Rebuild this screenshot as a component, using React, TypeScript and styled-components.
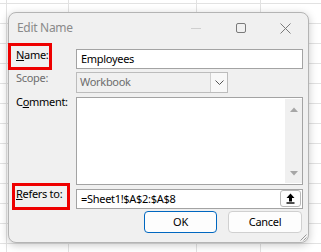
import React from "react";
import styled, { createGlobalStyle } from "styled-components";

const GlobalStyle = createGlobalStyle`
	html, body {
		margin: 0;
		padding: 0;
		background: #ffffff;
	}
	body {
		font-family: "Noto Sans", "Open Sans", sans-serif;
		font-size: 11px;
		letter-spacing: -0.3px;
	}
`;

// spreadsheet grid behind the dialog
const Sheet = styled.div`
	width: 321px;
	height: 252px;
	overflow: hidden;
	box-sizing: border-box;
	padding: 12px 0 0 8px;
	background-color: #ffffff;
	background-image: linear-gradient(#e2e2e2 1px, transparent 1px),
		linear-gradient(
			90deg,
			transparent 6px,
			#e2e2e2 6px,
			#e2e2e2 7px,
			transparent 7px,
			transparent 68px,
			#e2e2e2 68px,
			#e2e2e2 69px,
			transparent 69px,
			transparent 196px,
			#e2e2e2 196px,
			#e2e2e2 197px,
			transparent 197px,
			transparent 260px,
			#e2e2e2 260px,
			#e2e2e2 261px,
			transparent 261px
		);
	background-size: 100% 20px, 100% 100%;
	background-position: 0 3px, 0 0;
	background-repeat: repeat-y, no-repeat;
`;

const Dialog = styled.div`
	position: relative;
	width: 301px;
	height: 231px;
	box-sizing: border-box;
	background: #f0f0f0;
	border: 1px solid #b4b4b4;
	border-radius: 8px;
	box-shadow: 0 2px 8px rgba(0, 0, 0, 0.22);
	display: flex;
	flex-direction: column;
`;

const TitleBar = styled.div`
	display: flex;
	align-items: center;
	height: 30px;
	flex: none;
`;

const Title = styled.div`
	flex: 1;
	padding-left: 8px;
	color: #8a8a8a;
	font-size: 12px;
	line-height: 16px;
`;

const CaptionButton = styled.div`
	width: 45px;
	height: 30px;
	display: flex;
	align-items: center;
	justify-content: center;
`;

const Form = styled.div`
	display: flex;
	flex-direction: column;
	padding-right: 5px;
`;

const Row = styled.div<{ $h: number }>`
	display: flex;
	height: ${(p) => p.$h}px;
	flex: none;
`;

const LabelCol = styled.div`
	width: 67px;
	flex: none;
`;

const FieldCol = styled.div`
	flex: 1;
	min-width: 0;
`;

const Label = styled.div<{ $mt: number; $muted?: boolean }>`
	margin-top: ${(p) => p.$mt}px;
	padding-left: 7px;
	line-height: 16px;
	color: ${(p) => (p.$muted ? "#6d6d6d" : "#000000")};
	white-space: nowrap;
`;

// red annotation frame drawn round a label
const MarkedLabel = styled.div<{ $ml: number; $mt: number; $w: number; $pl: number; $pt: number }>`
	box-sizing: border-box;
	width: ${(p) => p.$w}px;
	height: 27px;
	margin-left: ${(p) => p.$ml}px;
	margin-top: ${(p) => p.$mt}px;
	padding: ${(p) => p.$pt}px 0 0 ${(p) => p.$pl}px;
	border: 3px solid #ee0000;
	line-height: 16px;
	color: #000000;
	white-space: nowrap;
`;

const TextInput = styled.div<{ $mt: number }>`
	box-sizing: border-box;
	display: flex;
	align-items: center;
	height: 20px;
	margin-top: ${(p) => p.$mt}px;
	padding: 0 0 1px 4px;
	background: #ffffff;
	border: 1px solid #a3a3a3;
	color: #000000;
	white-space: nowrap;
`;

const InputText = styled.span`
	flex: 1;
`;

const Select = styled.div`
	box-sizing: border-box;
	display: flex;
	width: 152px;
	height: 21px;
	margin-top: 2px;
	border: 1px solid #bcbcbc;
	background: #f0f0f0;
	color: #6d6d6d;
`;

const SelectValue = styled.div`
	flex: 1;
	padding: 0 0 0 3px;
	line-height: 18px;
`;

const DropButton = styled.div`
	width: 16px;
	display: flex;
	align-items: center;
	justify-content: center;
	background: #f8f8f8;
	border-left: 1px solid #d0d0d0;
`;

const TextArea = styled.div`
	box-sizing: border-box;
	display: flex;
	justify-content: flex-end;
	height: 88px;
	margin-top: 2px;
	background: #ffffff;
	border: 1px solid #a3a3a3;
`;

const ScrollBar = styled.div`
	width: 17px;
	margin: 1px 0;
	background: #f0f0f0;
	display: flex;
	flex-direction: column;
	justify-content: space-between;
	align-items: center;
	padding: 8px 0 7px;
	box-sizing: border-box;
`;

const CollapseButton = styled.div`
	box-sizing: border-box;
	width: 21px;
	height: 17px;
	margin-right: 1px;
	display: flex;
	align-items: center;
	justify-content: center;
	background: #fdfdfd;
	border: 1px solid #b8b8b8;
	border-radius: 3px;
`;

const ButtonRow = styled.div`
	display: flex;
	justify-content: flex-end;
	gap: 11px;
	margin-top: 2px;
	padding-right: 1px;
`;

const Button = styled.div<{ $primary?: boolean }>`
	box-sizing: border-box;
	width: ${(p) => (p.$primary ? 73 : 74)}px;
	height: 22px;
	display: flex;
	align-items: center;
	justify-content: center;
	background: #fdfdfd;
	border: 1px solid ${(p) => (p.$primary ? "#0067c0" : "#d0d0d0")};
	border-radius: 4px;
	color: #000000;
	padding-bottom: 1px;
`;

const Grip = styled.svg`
	position: absolute;
	right: 1px;
	bottom: 1px;
`;

export default function App() {
	return (
		<>
			<GlobalStyle />
			<Sheet>
				<Dialog>
					<TitleBar>
						<Title>Edit Name</Title>
						<CaptionButton>
							<svg width="10" height="10" viewBox="0 0 10 10">
								<path d="M0 5.5h10" stroke="#cfcfcf" strokeWidth="1" />
							</svg>
						</CaptionButton>
						<CaptionButton>
							<svg width="10" height="10" viewBox="0 0 10 10">
								<rect x="0.5" y="0.5" width="9" height="9" rx="1.5" fill="none" stroke="#7a7a7a" />
							</svg>
						</CaptionButton>
						<CaptionButton>
							<svg width="11" height="11" viewBox="0 0 11 11">
								<path d="M0.5 0.5l10 10M10.5 0.5l-10 10" stroke="#7a7a7a" strokeWidth="1" />
							</svg>
						</CaptionButton>
					</TitleBar>

					<Form>
						<Row $h={27}>
							<LabelCol>
								<MarkedLabel $ml={-1} $mt={0} $w={44} $pl={5} $pt={1}>
									<u>N</u>ame:
								</MarkedLabel>
							</LabelCol>
							<FieldCol>
								<TextInput $mt={6}>
									<InputText>Employees</InputText>
								</TextInput>
							</FieldCol>
						</Row>

						<Row $h={25}>
							<LabelCol>
								<Label $mt={0} $muted>
									Scope:
								</Label>
							</LabelCol>
							<FieldCol>
								<Select>
									<SelectValue>Workbook</SelectValue>
									<DropButton>
										<svg width="9" height="5" viewBox="0 0 9 5">
											<path d="M0.5 0.5l4 4 4-4" fill="none" stroke="#555" strokeWidth="1" />
										</svg>
									</DropButton>
								</Select>
							</FieldCol>
						</Row>

						<Row $h={90}>
							<LabelCol>
								<Label $mt={-1}>
									C<u>o</u>mment:
								</Label>
							</LabelCol>
							<FieldCol>
								<TextArea>
									<ScrollBar>
										<svg width="8" height="5" viewBox="0 0 8 5">
											<path d="M0 5L4 0.5 8 5z" fill="#a6a6a6" />
										</svg>
										<svg width="8" height="5" viewBox="0 0 8 5">
											<path d="M0 0L4 4.5 8 0z" fill="#a6a6a6" />
										</svg>
									</ScrollBar>
								</TextArea>
							</FieldCol>
						</Row>

						<Row $h={24}>
							<LabelCol>
								<MarkedLabel $ml={3} $mt={-2} $w={58} $pl={1} $pt={0}>
									<u>R</u>efers to:
								</MarkedLabel>
							</LabelCol>
							<FieldCol>
								<TextInput $mt={4}>
									<InputText>=Sheet1!$A$2:$A$8</InputText>
									<CollapseButton>
										<svg width="9" height="11" viewBox="0 0 9 11">
											<path d="M4.5 0.5L0.5 5h2.5v3.5h3V5h2.5z" fill="#000" />
											<path d="M0.5 10h8" stroke="#000" strokeWidth="1.4" />
										</svg>
									</CollapseButton>
								</TextInput>
							</FieldCol>
						</Row>

						<ButtonRow>
							<Button $primary>OK</Button>
							<Button>Cancel</Button>
						</ButtonRow>
					</Form>

					<Grip width="8" height="8" viewBox="0 0 8 8">
						<path d="M7.5 1.5l-6 6M7.5 4.5l-3 3" stroke="#9a9a9a" strokeWidth="1" />
					</Grip>
				</Dialog>
			</Sheet>
		</>
	);
}
